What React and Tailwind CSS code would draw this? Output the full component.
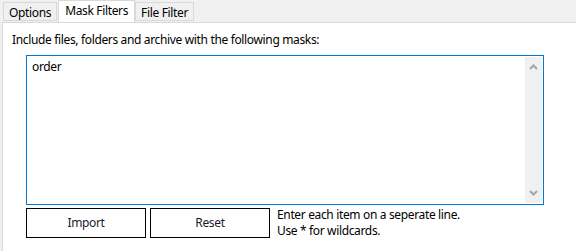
import React from 'react';

const font = { fontFamily: '"Noto Sans", "Open Sans", sans-serif' };

function Tab({ label, active }) {
  if (active) {
    return (
      <div className="relative z-10 -mb-px ml-px flex h-[22px] items-start border border-b-0 border-[#d9d9d9] bg-white px-[6px] pt-[2px] text-[12px] leading-[16px] tracking-[-0.35px] text-black">
        {label}
      </div>
    );
  }
  return (
    <div className="mt-[2px] flex h-[19px] items-start border border-[#d9d9d9] bg-[#f0f0f0] px-[5px] pt-[2px] text-[12px] leading-[16px] tracking-[-0.35px] text-black">
      {label}
    </div>
  );
}

function Chevron({ up }) {
  return (
    <svg width="9" height="6" viewBox="0 0 9 6" className="block">
      <path
        d={up ? 'M1 5 L4.5 1.5 L8 5' : 'M1 1 L4.5 4.5 L8 1'}
        fill="none"
        stroke="#a6a6a6"
        strokeWidth="2"
      />
    </svg>
  );
}

export default function App() {
  return (
    <div className="flex h-[251px] w-[576px] flex-col bg-[#f0f0f0]" style={font}>
      <div className="flex h-[22px] items-start pl-[3px]">
        <Tab label="Options" />
        <Tab label="Mask Filters" active />
        <Tab label="File Filter" />
      </div>
      <div className="ml-[2px] flex flex-1 flex-col border-l border-t border-[#d9d9d9] bg-white pl-[9px] pt-[9px] tracking-[-0.35px]">
        <p className="text-[12px] leading-[16px] text-black">
          Include files, folders and archive with the following masks:
        </p>
        <div className="ml-[14px] mt-[7px] flex h-[150px] w-[518px] border border-[#0078d7] bg-white">
          <div className="flex-1 px-[5px] pt-[3px] text-[12px] leading-[16px] text-black">order</div>
          <div className="my-px mr-px flex w-[17px] flex-col items-center justify-between bg-[#f0f0f0] py-[7px]">
            <Chevron up />
            <Chevron />
          </div>
        </div>
        <div className="ml-[14px] mt-[3px] flex items-start">
          <button className="flex h-[30px] w-[120px] items-center justify-center border border-black bg-white text-[12px] text-[#1a1a2e]">
            Import
          </button>
          <button className="ml-[4px] flex h-[30px] w-[120px] items-center justify-center border border-black bg-white text-[12px] text-[#1a1a2e]">
            Reset
          </button>
          <div className="ml-[7px] mt-[-1px] text-[12px] leading-[16px] text-black">
            <p>Enter each item on a seperate line.</p>
            <p>Use * for wildcards.</p>
          </div>
        </div>
      </div>
    </div>
  );
}
